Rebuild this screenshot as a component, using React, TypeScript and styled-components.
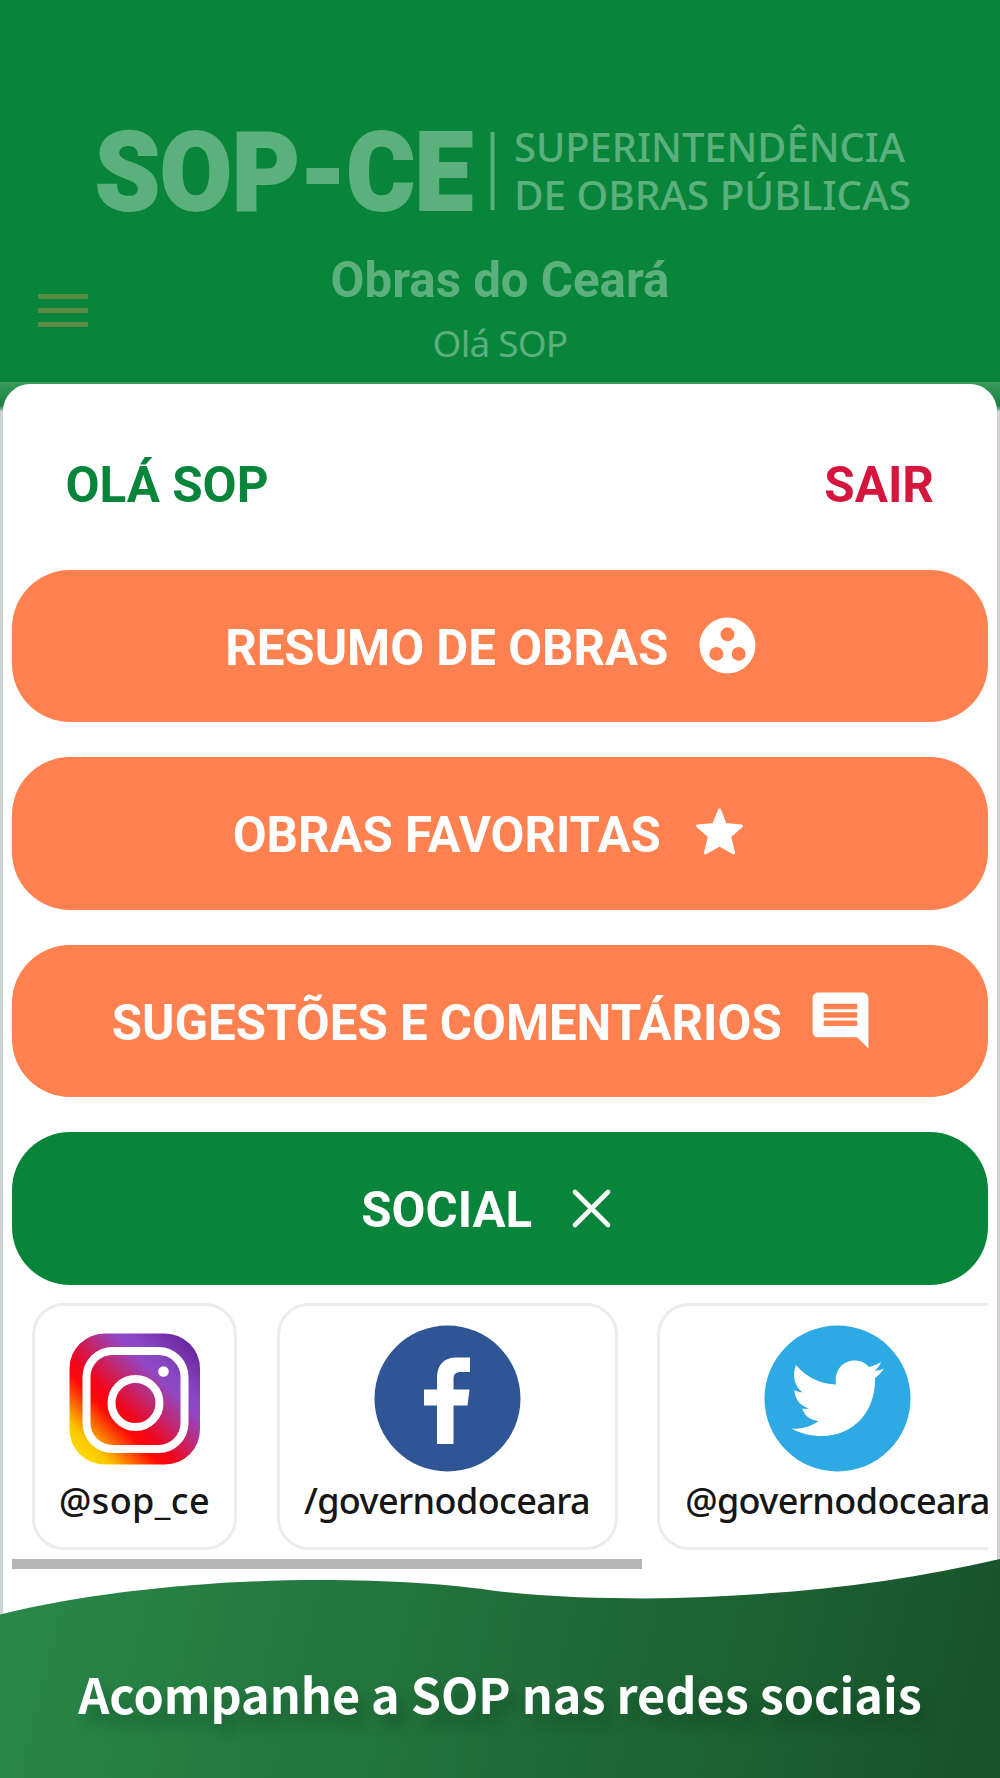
import React from "react";
import styled, { createGlobalStyle } from "styled-components";
import { MdComment, MdGroupWork } from "react-icons/md";

const GlobalStyle = createGlobalStyle`
  * { box-sizing: border-box; }
  body { margin: 0; background: #fff; }
`;

const green = "#08853a";
const orange = "#ff814f";
const faded = "#5bb07d";

const Screen = styled.div`
  width: 1000px;
  height: 1778px;
  display: flex;
  flex-direction: column;
  overflow: hidden;
  background: #fff;
  font-family: Roboto, "Noto Sans", sans-serif;
`;

const Header = styled.header`
  flex: none;
  height: 382px;
  padding-top: 84px;
  display: flex;
  flex-direction: column;
  align-items: center;
  background: ${green};
  color: ${faded};
`;

const Logo = styled.svg`
  flex: none;
  display: block;
  fill: ${faded};
  font-family: "Noto Sans", sans-serif;
`;

const TitleBar = styled.div`
  width: 100%;
  display: grid;
  grid-template-columns: 126px 1fr 126px;
  padding-top: 13px;
`;

const MenuButton = styled.button`
  width: 50px;
  height: 33px;
  margin: 43px 0 0 38px;
  padding: 0;
  border: 0;
  background: none;
  display: flex;
  flex-direction: column;
  justify-content: space-between;
`;

const MenuLine = styled.span`
  height: 5px;
  background: #5b8b43;
`;

const Titles = styled.div`
  display: flex;
  flex-direction: column;
  align-items: center;
  white-space: nowrap;
`;

const AppTitle = styled.h1`
  margin: 0;
  font-size: 49.2px;
  line-height: 58px;
  font-weight: 700;
`;

const Greeting = styled.p`
  margin: 13px 0 0;
  font: 400 37px/42px "Noto Sans", sans-serif;
  letter-spacing: -0.8px;
`;

const SheetBackdrop = styled.div`
  flex: none;
  height: 1238px;
  padding-top: 2px;
  background: linear-gradient(#3a9b5b 0, #188044 24px, #cdd4d2 30px);
`;

const Sheet = styled.main`
  height: 100%;
  margin: 0 3px;
  padding: 0 9px;
  border-radius: 27px 27px 0 0;
  background: #fff;
  display: flex;
  flex-direction: column;
`;

const SheetTop = styled.div`
  flex: none;
  height: 185.5px;
  padding: 72px 54px 0 53.5px;
  display: flex;
  justify-content: space-between;
`;

const TopLabel = styled.span<{ $color: string }>`
  font-size: 49.4px;
  line-height: 58px;
  font-weight: 700;
  color: ${(p) => p.$color};
`;

const Actions = styled.nav`
  display: flex;
  flex-direction: column;
  gap: 35px;
`;

const ActionButton = styled.button<{ $color?: string }>`
  height: 152.5px;
  padding: 0;
  border: 0;
  border-radius: 58px;
  display: flex;
  align-items: center;
  justify-content: center;
  background: ${(p) => p.$color ?? orange};
  color: #fff;
  font: 700 49.2px/58px Roboto, sans-serif;
  white-space: nowrap;
`;

const ActionLabel = styled.span`
  padding-top: 4px;
`;

const ActionIcon = styled.span`
  width: 67px;
  height: 67px;
  margin: 0 14px 0 25.5px;
  display: flex;
`;

const SocialScroller = styled.div`
  flex: none;
  margin-top: 18.5px;
  padding-left: 20px;
  display: flex;
  gap: 39.5px;
  overflow: hidden;
`;

const SocialCard = styled.a<{ $width: number }>`
  flex: none;
  width: ${(p) => p.$width}px;
  height: 247px;
  padding-top: 19px;
  border: 3px solid #ececec;
  border-radius: 32px;
  display: flex;
  flex-direction: column;
  align-items: center;
  color: #161616;
`;

const SocialName = styled.span<{ $tracking: number }>`
  font: 500 36px/48px "Noto Sans", sans-serif;
  letter-spacing: ${(p) => p.$tracking}px;
  margin-top: 5px;
  white-space: nowrap;
`;

const ScrollThumb = styled.div`
  flex: none;
  width: 630px;
  height: 10px;
  margin-top: 9px;
  background: #b5b5b5;
`;

const Footer = styled.footer`
  position: relative;
  flex: none;
  height: 220px;
  margin-top: -62px;
  padding-top: 99px;
  text-align: center;
`;

const Wave = styled.svg`
  position: absolute;
  inset: 0;
`;

const Slogan = styled.p`
  position: relative;
  margin: 0;
  color: #fff;
  font: 700 48.5px/72px "Noto Sans CJK SC", sans-serif;
  white-space: nowrap;
  text-shadow: 8px 12px 14px rgba(0, 40, 15, 0.28);
`;

const StarIcon = () => (
  <svg width="67" height="67" viewBox="0 0 67 67" fill="#fff" stroke="#fff" strokeWidth="3" strokeLinejoin="round">
    <path d="M33.5 10L39.3 24.500L55.500 26L43.6 36.500L47.6 53L33.5 45L19.4 53L23.4 36.500L11.500 26L27.7 24.500Z" />
  </svg>
);

const CloseIcon = () => (
  <svg width="67" height="67" viewBox="0 0 67 67" stroke="#fff" strokeWidth="4.6" strokeLinecap="round">
    <path d="M17 17L50 50M50 17L17 50" />
  </svg>
);

const InstagramIcon = () => (
  <svg width="147" height="147" viewBox="0 0 147 147">
    <defs>
      <linearGradient id="insta" x1="0.06" y1="0.94" x2="0.94" y2="0.06">
        <stop offset="0" stopColor="#fd0" />
        <stop offset="0.11" stopColor="#fbc800" />
        <stop offset="0.32" stopColor="#fd0b06" />
        <stop offset="0.4" stopColor="#f20518" />
        <stop offset="0.7" stopColor="#9148c6" />
        <stop offset="0.78" stopColor="#8846c2" />
        <stop offset="1" stopColor="#67249b" />
      </linearGradient>
    </defs>
    <rect x="8.5" y="8.5" width="130.5" height="131" rx="35" fill="url(#insta)" />
    <g fill="none" stroke="#fff" strokeWidth="8">
      <rect x="25.5" y="26" width="98" height="98" rx="26" />
      <circle cx="74.5" cy="78" r="24" />
    </g>
    <circle cx="102.5" cy="46.5" r="5.3" fill="#fff" />
  </svg>
);

const FacebookIcon = () => (
  <svg width="147" height="147" viewBox="0 0 147 147">
    <circle cx="73.5" cy="73.5" r="73" fill="#2f5596" />
    <path
      fill="#fff"
      d="M63 119V80.500H50V64.500H63V53C63 40 70 32.500 82 32.500H96V47H87C81.500 47 79.500 49.500 79.500 54V64.500H95.500L93.500 80.500H79.500V119Z"
    />
  </svg>
);

const TwitterIcon = () => (
  <svg width="147" height="147" viewBox="0 0 147 147">
    <circle cx="73.5" cy="73.5" r="73" fill="#2da9e3" />
    <path
      fill="#fff"
      d="M32 40C42 52 56 59 72 59.500C70 45 79 35.500 90.500 35.500C96 35.500 101 37.500 105 42C109 41 113.500 39 117 37C115.500 41 113.500 43.500 110.500 46C114 45.500 117 45 120 43.500C117.500 47.500 114.500 50.500 111 53C112 86 90 111 58 111C47 111 36 108.500 27.500 103.500C37 104.500 47 101.500 54.500 96C46.500 95.500 40.500 90.500 38 83.500C40.500 84 43 84 45 83.500C36.500 81 30.500 74 30.500 65C33 66.500 35.500 67 38.500 67.500C30 61 28 50 32 40Z"
    />
  </svg>
);

const actions = [
  { label: "RESUMO DE OBRAS", icon: <MdGroupWork size={67} /> },
  { label: "OBRAS FAVORITAS", icon: <StarIcon /> },
  { label: "SUGESTÕES E COMENTÁRIOS", icon: <MdComment size={67} /> },
  { label: "SOCIAL", icon: <CloseIcon />, color: green },
];

const networks = [
  { name: "@sop_ce", width: 205, tracking: 0.4, icon: <InstagramIcon /> },
  { name: "/governodoceara", width: 341, tracking: -0.6, icon: <FacebookIcon /> },
  { name: "@governodoceara", width: 361, tracking: -0.6, icon: <TwitterIcon /> },
];

export default function App() {
  return (
    <>
      <GlobalStyle />
      <Screen>
        <Header>
          <Logo width="1000" height="154" viewBox="0 84 1000 154">
            <text
              x="95"
              y="209.500"
              fontSize="108.500"
              fontWeight="900"
              fontFamily="Roboto, sans-serif"
              stroke={faded}
              strokeWidth="2"
              textLength="378"
              lengthAdjust="spacingAndGlyphs"
            >
              SOP-CE
            </text>
            <rect x="490.500" y="132" width="4" height="78" />
            <text x="514" y="161.500" fontSize="39.500" fontWeight="500" textLength="391" lengthAdjust="spacingAndGlyphs">
              SUPERINTENDÊNCIA
            </text>
            <text x="514" y="209.500" fontSize="39.500" fontWeight="500" textLength="397" lengthAdjust="spacingAndGlyphs">
              DE OBRAS PÚBLICAS
            </text>
          </Logo>
          <TitleBar>
            <MenuButton aria-label="Menu">
              <MenuLine />
              <MenuLine />
              <MenuLine />
            </MenuButton>
            <Titles>
              <AppTitle>Obras do Ceará</AppTitle>
              <Greeting>Olá SOP</Greeting>
            </Titles>
          </TitleBar>
        </Header>
        <SheetBackdrop>
          <Sheet>
            <SheetTop>
              <TopLabel $color="#08853a">OLÁ SOP</TopLabel>
              <TopLabel $color="#d6153f">SAIR</TopLabel>
            </SheetTop>
            <Actions>
              {actions.map((a) => (
                <ActionButton key={a.label} $color={a.color}>
                  <ActionLabel>{a.label}</ActionLabel>
                  <ActionIcon>{a.icon}</ActionIcon>
                </ActionButton>
              ))}
            </Actions>
            <SocialScroller>
              {networks.map((n) => (
                <SocialCard key={n.name} $width={n.width}>
                  {n.icon}
                  <SocialName $tracking={n.tracking}>{n.name}</SocialName>
                </SocialCard>
              ))}
            </SocialScroller>
            <ScrollThumb />
          </Sheet>
        </SheetBackdrop>
        <Footer>
          <Wave width="1000" height="220" viewBox="0 1558 1000 220">
            <defs>
              <linearGradient id="wave" gradientUnits="userSpaceOnUse" x1="0" y1="1620" x2="930" y2="1850">
                <stop offset="0" stopColor="#298848" />
                <stop offset="1" stopColor="#19552c" />
              </linearGradient>
            </defs>
            <path
              fill="url(#wave)"
              d="M0 1614.500C100 1590 220 1580 320 1580C390 1580 450 1584 500 1591.500C550 1597 600 1598.500 645 1598.500C770 1597 890 1585 1000 1559V1778H0Z"
            />
          </Wave>
          <Slogan>Acompanhe a SOP nas redes sociais</Slogan>
        </Footer>
      </Screen>
    </>
  );
}
